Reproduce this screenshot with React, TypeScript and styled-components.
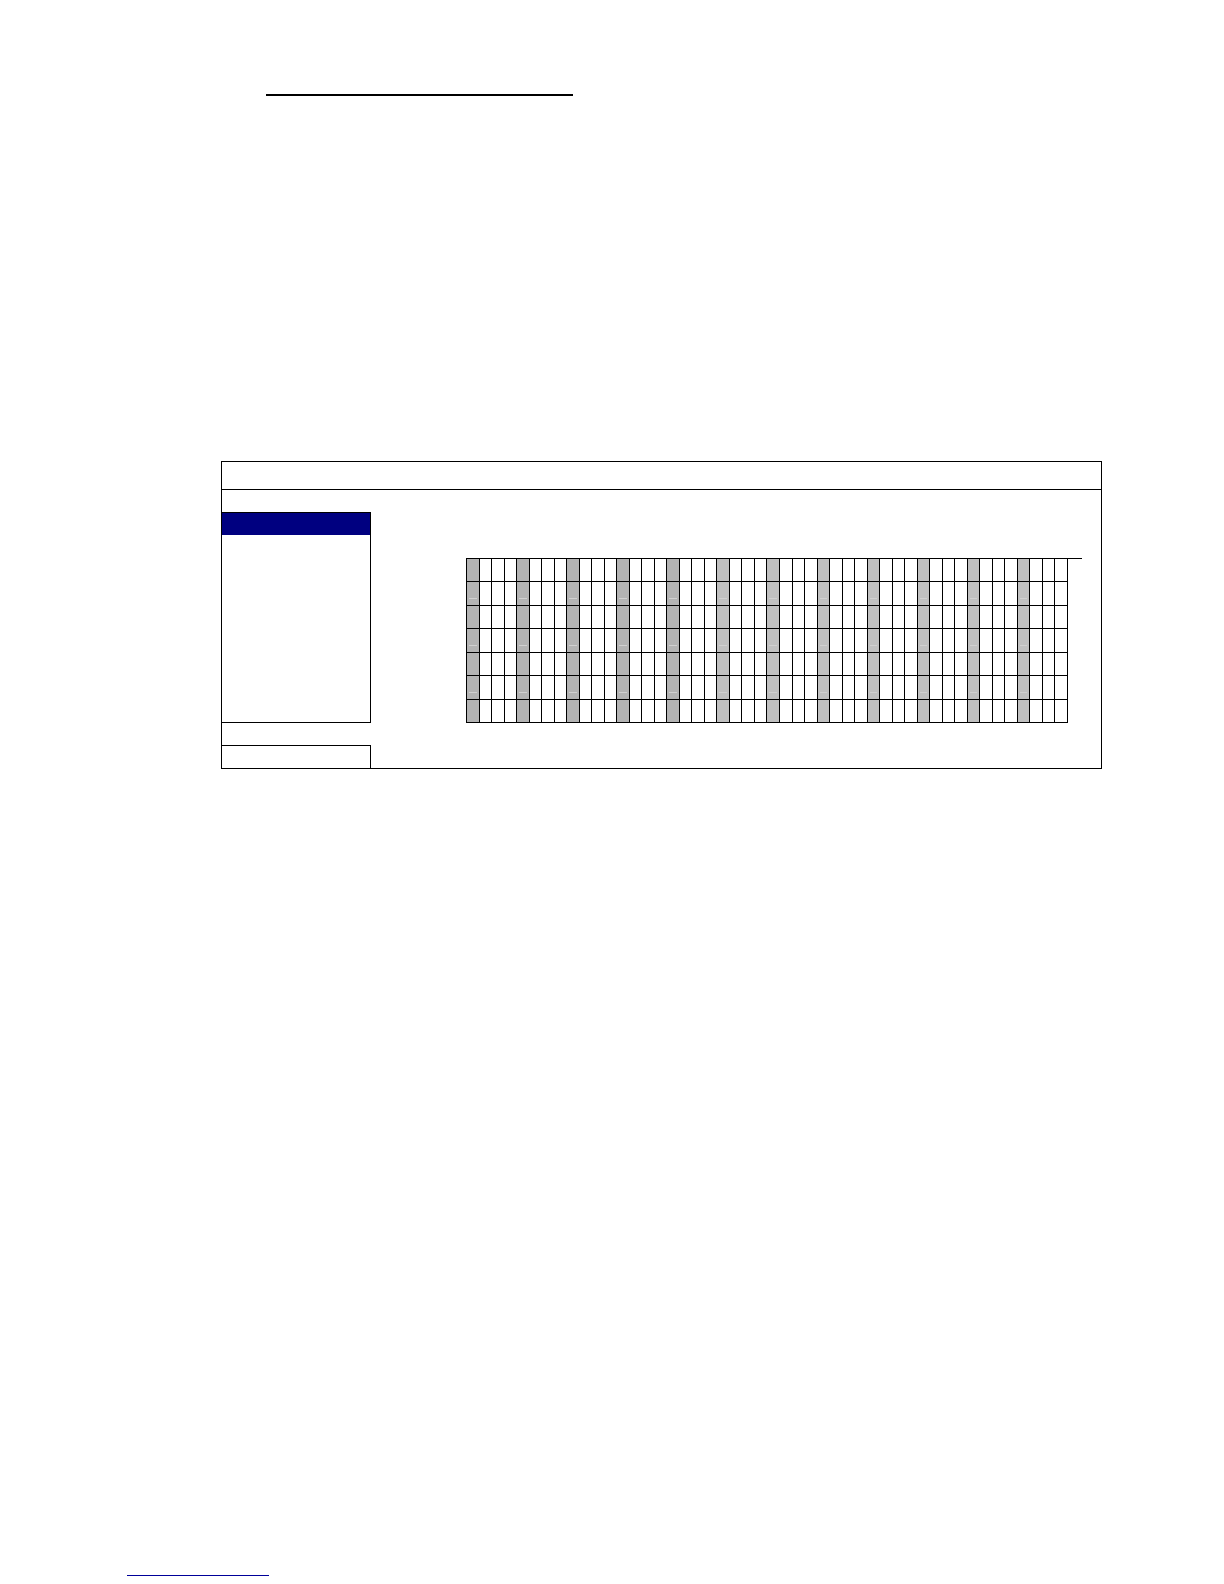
import React from 'react';
import styled, { createGlobalStyle } from 'styled-components';

const HOURS = 12;
const SLOTS_PER_HOUR = 4;
const DAYS = 7;
const DARK_HOURS = 5;

const GlobalStyle = createGlobalStyle`
  *, *::before, *::after { box-sizing: border-box; }
  body {
    margin: 0;
    background: #fff;
    color: #000;
    font-family: "Liberation Sans", Arial, sans-serif;
  }
`;

const Page = styled.div`
  display: flex;
  flex-direction: column;
  min-height: 100vh;
  padding: 94px 122px 8px 127px;
`;

const Heading = styled.header`
  width: 307px;
  margin-left: 139px;
  border-top: 2px solid #000;
`;

const Planner = styled.main`
  margin: 365px 0 auto 94px;
  border: 1px solid #000;
`;

const TitleBar = styled.div`
  height: 28px;
  border-bottom: 1px solid #000;
`;

const Body = styled.div`
  display: flex;
  padding-top: 22px;
`;

const Sidebar = styled.aside`
  display: flex;
  flex-direction: column;
  gap: 22px;
  width: 149px;
`;

const Panel = styled.div<{ $open?: boolean }>`
  height: ${(p) => (p.$open ? 23 : 211)}px;
  border: solid #000;
  border-width: ${(p) => (p.$open ? '1px 1px 0 0' : '1px 1px 1px 0')};
`;

const Selected = styled.div`
  height: 22px;
  background: #000080;
`;

const Chart = styled.section`
  flex: 1;
  margin: 46px 19px 45px 95px;
  padding-right: 14px;
  border-top: 1px solid #000;
`;

const Schedule = styled.table`
  display: block;
  border-left: 1px solid #000;
`;

const Days = styled.tbody`
  display: grid;
  grid-template-rows: repeat(${DAYS}, 1fr);
  height: 164px;
`;

const Day = styled.tr`
  display: grid;
  grid-template-columns: repeat(${HOURS * SLOTS_PER_HOUR}, 1fr);
`;

const Slot = styled.td<{ $fill: string; $mark: boolean }>`
  padding: 16px 2px 0;
  border: solid #000;
  border-width: 0 1px 1px 0;
  background: ${(p) => p.$fill};

  &::before {
    content: "";
    display: ${(p) => (p.$mark ? 'block' : 'none')};
    height: 1px;
    background: #d0d0d0;
  }
`;

const FooterLink = styled.a`
  width: 142px;
  border-bottom: 1px solid #000099;
`;

const slotFill = (slot: number) => {
  if (slot % SLOTS_PER_HOUR !== 0) return '#fff';
  return slot / SLOTS_PER_HOUR < DARK_HOURS ? '#b3b3b3' : '#c0c0c0';
};

export default function App() {
  return (
    <>
      <GlobalStyle />
      <Page>
        <Heading />
        <Planner>
          <TitleBar />
          <Body>
            <Sidebar>
              <Panel>
                <Selected />
              </Panel>
              <Panel $open />
            </Sidebar>
            <Chart>
              <Schedule>
                <Days>
                  {Array.from({ length: DAYS }, (_, day) => (
                    <Day key={day}>
                      {Array.from({ length: HOURS * SLOTS_PER_HOUR }, (_, slot) => (
                        <Slot
                          key={slot}
                          $fill={slotFill(slot)}
                          $mark={day % 2 === 1 && slot % SLOTS_PER_HOUR === 0}
                        />
                      ))}
                    </Day>
                  ))}
                </Days>
              </Schedule>
            </Chart>
          </Body>
        </Planner>
        <FooterLink href="#" />
      </Page>
    </>
  );
}
